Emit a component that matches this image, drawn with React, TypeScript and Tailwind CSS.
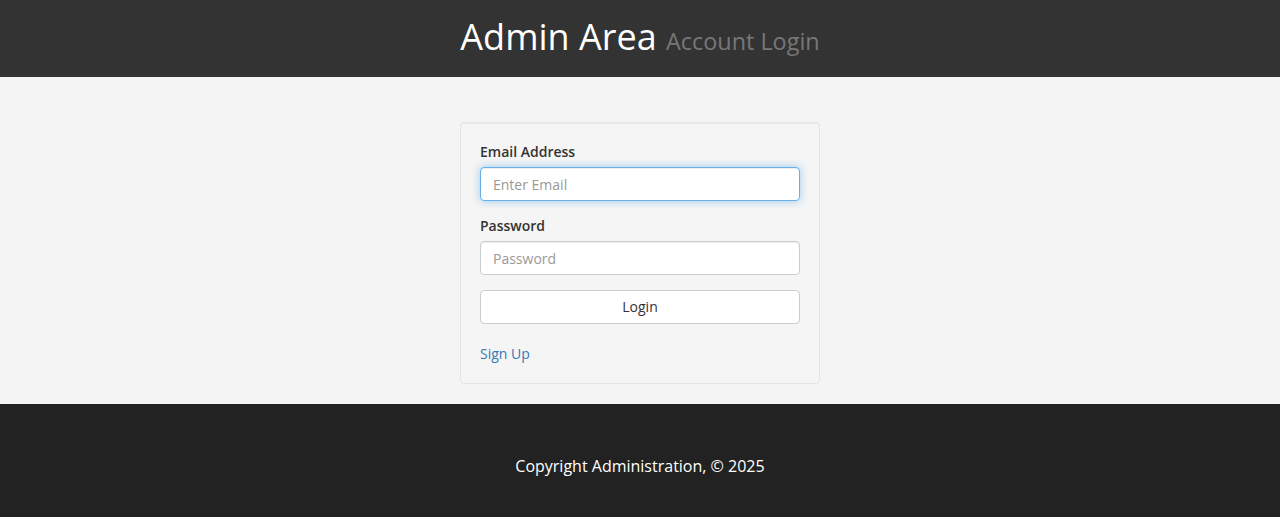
export default function App() {
  return (
    <div className="flex flex-col min-h-screen font-['Open_Sans',sans-serif] text-[14px] text-[#333]">
      <header className="h-[77px] bg-[#333333] flex items-center justify-center">
        <h1 className="text-[36px] leading-[1.1] text-white font-normal pb-[4px]">
          Admin Area <small className="text-[23.4px] text-[#777]">Account Login</small>
        </h1>
      </header>
      <main className="bg-[#f4f4f4] pt-[45px] pb-[20px]">
        <div className="w-[360px] mx-auto bg-[#f5f5f5] border border-[#e3e3e3] rounded-[4px] p-[19px] shadow-[inset_0_1px_1px_rgba(0,0,0,0.05)]">
          <form onSubmit={(e) => e.preventDefault()}>
            <div className="mb-[15px]">
              <label className="block font-semibold leading-[20px] mb-[5px]">Email Address</label>
              <input
                type="email"
                placeholder="Enter Email"
                className="block w-full h-[34px] px-[12px] py-[6px] bg-white border border-[#66afe9] rounded-[4px] outline-none placeholder:text-[#999] shadow-[inset_0_1px_1px_rgba(0,0,0,0.075),0_0_8px_rgba(102,175,233,0.6)]"
              />
            </div>
            <div className="mb-[15px]">
              <label className="block font-semibold leading-[20px] mb-[5px]">Password</label>
              <input
                type="password"
                placeholder="Password"
                className="block w-full h-[34px] px-[12px] py-[6px] bg-white border border-[#ccc] rounded-[4px] outline-none placeholder:text-[#999] shadow-[inset_0_1px_1px_rgba(0,0,0,0.075)]"
              />
            </div>
            <button className="block w-full h-[34px] bg-white border border-[#ccc] rounded-[4px] text-[#333] leading-[20px]">
              Login
            </button>
            <div className="mt-[20px] leading-[20px]">
              <a href="#" className="text-[#337ab7]">Sign Up</a>
            </div>
          </form>
        </div>
      </main>
      <footer className="bg-[#222222] flex-1 text-center text-white text-[16px] pt-[51px] pb-[40px]">
        <p className="leading-[22px]">Copyright Administration, &copy; 2025</p>
      </footer>
    </div>
  );
}
